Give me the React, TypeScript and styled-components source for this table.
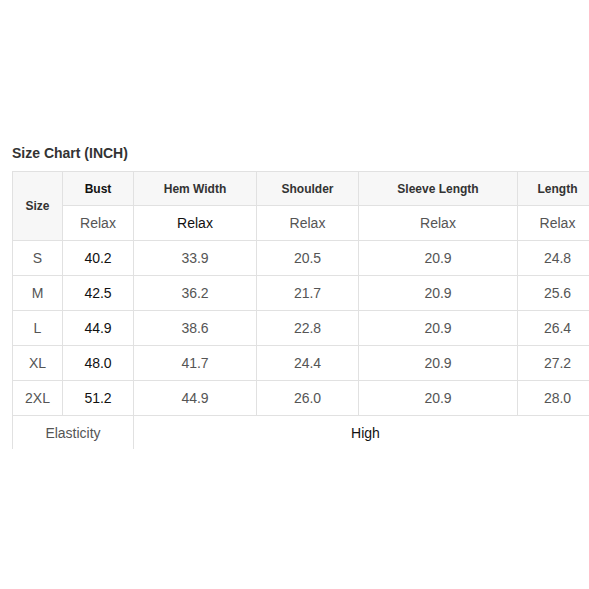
import styled, { createGlobalStyle } from "styled-components"

const GlobalStyle = createGlobalStyle`
    html, body {
        margin: 0;
        padding: 0;
        background: #fff;
        overflow: hidden;
    }
    body {
        font-family: "Liberation Sans", Arial, sans-serif;
    }
`

type TRow = {
    size: string
    bust: string
    hem: string
    shoulder: string
    sleeve: string
    length: string
}

const rows: TRow[] = [
    { size: "S", bust: "40.2", hem: "33.9", shoulder: "20.5", sleeve: "20.9", length: "24.8" },
    { size: "M", bust: "42.5", hem: "36.2", shoulder: "21.7", sleeve: "20.9", length: "25.6" },
    { size: "L", bust: "44.9", hem: "38.6", shoulder: "22.8", sleeve: "20.9", length: "26.4" },
    { size: "XL", bust: "48.0", hem: "41.7", shoulder: "24.4", sleeve: "20.9", length: "27.2" },
    { size: "2XL", bust: "51.2", hem: "44.9", shoulder: "26.0", sleeve: "20.9", length: "28.0" },
]

const widths = [50, 71, 123, 102, 159, 80]

const App = () => {
    return (
        <Page>
            <GlobalStyle />
            <Title>Size Chart (INCH)</Title>
            <TableClip>
                <Table>
                    <colgroup>
                        {widths.map((w, i) => (
                            <col key={i} style={{ width: w }} />
                        ))}
                    </colgroup>
                    <thead>
                        <tr>
                            <Head rowSpan={2}>Size</Head>
                            <Head $dark>Bust</Head>
                            <Head>Hem Width</Head>
                            <Head>Shoulder</Head>
                            <Head>Sleeve Length</Head>
                            <Head>Length</Head>
                        </tr>
                        <tr>
                            <Cell>Relax</Cell>
                            <Cell $dark>Relax</Cell>
                            <Cell>Relax</Cell>
                            <Cell>Relax</Cell>
                            <Cell>Relax</Cell>
                        </tr>
                    </thead>
                    <tbody>
                        {rows.map((r) => (
                            <tr key={r.size}>
                                <Cell>{r.size}</Cell>
                                <Cell $dark>{r.bust}</Cell>
                                <Cell>{r.hem}</Cell>
                                <Cell>{r.shoulder}</Cell>
                                <Cell>{r.sleeve}</Cell>
                                <Cell>{r.length}</Cell>
                            </tr>
                        ))}
                        <tr>
                            <Cell colSpan={2}>Elasticity</Cell>
                            <Cell colSpan={4} $dark>High</Cell>
                        </tr>
                    </tbody>
                </Table>
            </TableClip>
        </Page>
    )
}

export default App

const Page = styled.div`
    width: 589px;
    height: 589px;
    padding: 145px 0 0 12px;
    box-sizing: border-box;
`

const Title = styled.div`
    font-size: 14px;
    font-weight: 700;
    color: #333;
    line-height: 17px;
    margin-bottom: 9px;
`

const TableClip = styled.div`
    width: 577px;
    height: 278px;
    overflow: hidden;
`

const Table = styled.table`
    border-collapse: collapse;
    table-layout: fixed;
    width: 585px;
`

const Head = styled.th<{ $dark?: boolean }>`
    height: 33px;
    padding: 0;
    border: 1px solid #e1e1e1;
    background: #f7f7f7;
    font-size: 12px;
    font-weight: 700;
    color: ${({ $dark }) => ($dark ? "#111" : "#333")};
    text-align: center;
    vertical-align: middle;
`

const Cell = styled.td<{ $dark?: boolean }>`
    height: 34px;
    padding: 0;
    border: 1px solid #e1e1e1;
    font-size: 14px;
    color: ${({ $dark }) => ($dark ? "#111" : "#555")};
    text-align: center;
    vertical-align: middle;
`
